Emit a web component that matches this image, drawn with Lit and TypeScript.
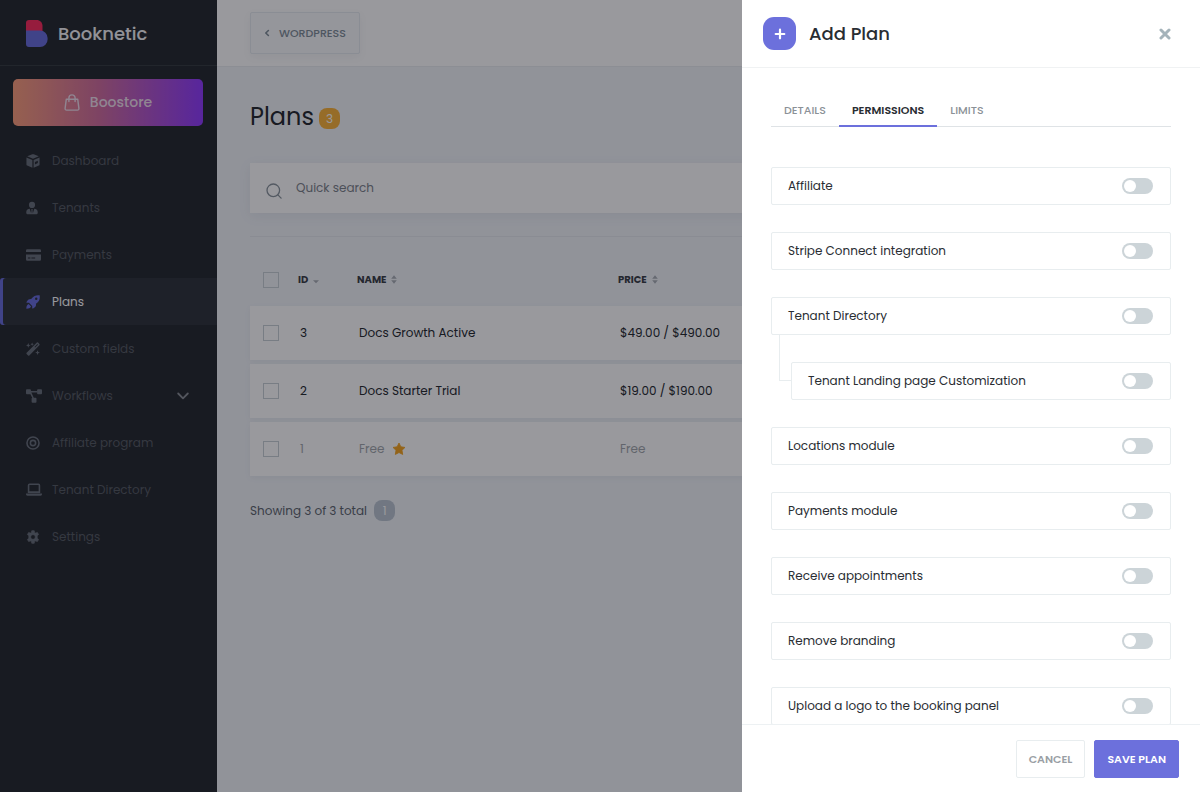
import { LitElement, html, css, svg, nothing, TemplateResult } from "lit";
import { customElement, property, state } from "lit/decorators.js";
import { classMap } from "lit/directives/class-map.js";

const icons: Record<string, TemplateResult> = {
  cube: svg`<svg viewBox="0 0 16 16" width="14" height="14"><path fill="currentColor" fill-rule="evenodd" d="M8 .3c.3 0 .5 0 .8.1l5.800 2.200L8 5.500 1.400 2.600 7.200.4c.3-.1.500-.1.800-.1zM.5 3.900l6.800 3v8.700L1.300 13.200a1.300 1.300 0 0 1-.8-1.200zM15.500 3.900V12a1.300 1.300 0 0 1-.8 1.200l-6 2.400V6.900zM10.200 9v2.900l3.300-1.500V7.600z"/></svg>`,
  user: svg`<svg viewBox="0 0 14 16" width="12" height="14"><path fill="currentColor" d="M7 .8a3.600 3.600 0 1 1 0 7.200 3.600 3.600 0 0 1 0-7.200zM4.300 9 6 14.200 6.400 11 5.900 9.600h2.200L7.600 11l.4 3.200L9.700 9c2.500.2 4 1.700 4 4v.9a1.300 1.300 0 0 1-1.300 1.300H1.600A1.300 1.300 0 0 1 .3 13.900V13c0-2.300 1.500-3.800 4-4z"/></svg>`,
  card: svg`<svg viewBox="0 0 18 14" width="15" height="12"><path fill="currentColor" fill-rule="evenodd" d="M1.500 0h15A1.500 1.500 0 0 1 18 1.500V3.300H0V1.500A1.500 1.500 0 0 1 1.500 0zM0 6.300h18v6.200a1.500 1.500 0 0 1-1.500 1.500h-15A1.500 1.500 0 0 1 0 12.500zm2.300 3.600v1.400h3V9.900zm4.200 0v1.400H11V9.900z"/></svg>`,
  rocket: svg`<svg viewBox="0 0 16 16" width="14" height="14"><path fill="currentColor" fill-rule="evenodd" d="M15.600.4c.5 3.600 0 6.500-4.200 9.700.3 2.300-.3 3.500-3.300 5.300-.6.3-1 0-1-.6v-2.200L3.400 8.900H1.200c-.6 0-.9-.5-.6-1C2.400 5.100 3.600 4.500 5.900 4.600 9.100.5 12 0 15.600.4zM11.700 2.900a1.400 1.400 0 1 0 0 2.800 1.400 1.400 0 0 0 0-2.800zM3 10.300l2.800 2.800C4.900 15 2.900 15.700.4 15.600c0-2.500.7-4.400 2.600-5.300z"/></svg>`,
  wand: svg`<svg viewBox="0 0 16 16" width="14" height="14"><path fill="currentColor" fill-rule="evenodd" d="M12.400.7a1 1 0 0 1 1.400 0l1.500 1.500a1 1 0 0 1 0 1.400L3.800 15.300a1 1 0 0 1-1.400 0L.7 13.600a1 1 0 0 1 0-1.400zm.7 1.700L9.800 5.700l.6.600L13.700 3zM7 .5l.6 1.400L9 2.500l-1.400.6L7 4.500l-.6-1.400L5 2.500l1.400-.6zM2.600 1.200l.8 1.900 1.900.8-1.900.8-.8 1.900-.8-1.900L0 3.900l1.800-.8zM13.200 9.400l.8 1.900 1.900.8-1.900.8-.8 1.900-.8-1.900-1.900-.8 1.900-.8z"/></svg>`,
  flow: svg`<svg viewBox="0 0 18 15" width="16" height="14"><g fill="currentColor"><rect x="0" y="0" width="5.500" height="5.500" rx="1"/><rect x="12.500" y="0" width="5.500" height="5.500" rx="1"/><rect x="6.300" y="9.500" width="5.500" height="5.500" rx="1"/><path d="M5 2h8v1.600H6l2.800 5.800-1.400.8L3.800 3.300z"/></g></svg>`,
  target: svg`<svg viewBox="0 0 16 16" width="14" height="14" fill="none" stroke="currentColor" stroke-width="1.800"><circle cx="8" cy="8" r="6.900"/><circle cx="8" cy="8" r="3"/></svg>`,
  laptop: svg`<svg viewBox="0 0 18 14" width="16" height="13"><path fill="none" stroke="currentColor" stroke-width="1.800" d="M2.900 10V2.200c0-.7.4-1.100 1.100-1.100h10c.7 0 1.100.4 1.100 1.100V10z"/><path fill="currentColor" d="M0 11.600h18v.8c0 1-.6 1.600-1.600 1.600H1.600C.6 14 0 13.400 0 12.400z"/></svg>`,
  gear: svg`<svg viewBox="0 0 16 16" width="14" height="14"><path fill="currentColor" stroke="currentColor" stroke-width=".8" stroke-linejoin="round" fill-rule="evenodd" d="M6.600.8h2.800l.4 2 1.200.7 2-.7 1.400 2.400-1.600 1.400v2.800l1.600 1.400-1.400 2.400-2-.7-1.200.7-.4 2H6.600l-.4-2-1.200-.7-2 .7-1.400-2.400 1.600-1.400V6.600L1.600 5.200 3 2.800l2 .7 1.200-.7zM8 5.300a2.700 2.700 0 1 0 0 5.400 2.700 2.700 0 0 0 0-5.400z"/></svg>`,
  chevronDown: svg`<svg viewBox="0 0 12 8" width="12" height="8" fill="none" stroke="currentColor" stroke-width="1.800" stroke-linecap="round" stroke-linejoin="round"><path d="m1.200 1.500 4.800 4.800 4.800-4.800"/></svg>`,
  chevronLeft: svg`<svg viewBox="0 0 6 8" width="6" height="8" fill="none" stroke="currentColor" stroke-width="1.600" stroke-linecap="round" stroke-linejoin="round"><path d="M4.400 1.500 1.800 4l2.600 2.500"/></svg>`,
  bag: svg`<svg viewBox="0 0 16 17" width="16" height="17" fill="none" stroke="currentColor" stroke-width="1.400" stroke-linejoin="round" stroke-linecap="round"><path d="M2.300 5.200h11.400l1.200 9.200c.1 1-.5 1.700-1.500 1.700H2.600c-1 0-1.600-.7-1.500-1.700z"/><path d="M4.900 7.500V4a3.100 3.100 0 0 1 6.200 0v3.500"/></svg>`,
  search: svg`<svg viewBox="0 0 16 16" width="16" height="16" fill="none" stroke="currentColor" stroke-width="1.300" stroke-linecap="round"><circle cx="7.300" cy="7.300" r="6.300"/><path d="m11.900 11.900 3.200 3.200"/></svg>`,
  star: svg`<svg viewBox="0 0 16 16" width="14" height="14"><path fill="currentColor" stroke="currentColor" stroke-width="1" stroke-linejoin="round" d="m8 1.200 2.100 4.300 4.700.7-3.400 3.300.8 4.700L8 12l-4.200 2.200.8-4.700L1.200 6.200l4.700-.7z"/></svg>`,
  plus: svg`<svg viewBox="0 0 12 12" width="12" height="12" stroke="currentColor" stroke-width="2.200" stroke-linecap="round"><path d="M6 1.700v8.600M1.700 6h8.600"/></svg>`,
  close: svg`<svg viewBox="0 0 12 12" width="12" height="12" stroke="currentColor" stroke-width="3" stroke-linecap="round"><path d="m2 2 8 8M10 2l-8 8"/></svg>`,
  sort: svg`<svg viewBox="0 0 6 9" width="6" height="9" fill="currentColor"><path d="M3 .3 5.800 3.700H.2zM3 8.700.2 5.300h5.600z"/></svg>`,
  sortDesc: svg`<svg viewBox="0 0 6 9" width="6" height="9" fill="currentColor"><path d="M3 8.200 0 5.200h6z"/></svg>`,
  logo: svg`<svg viewBox="0 0 22 27" width="22" height="27"><path fill="#fa2f60" d="M0 3a3 3 0 0 1 3-3h7.500c3.600 0 6 2.600 6 6v6H0z"/><path fill="#6c70dc" d="M0 10.500h14a7.600 7.600 0 0 1 7.600 7.700v1A7.600 7.600 0 0 1 14 27H3a3 3 0 0 1-3-3z"/></svg>`,
};

@customElement("app-sidebar")
export class AppSidebar extends LitElement {
  static styles = css`
    :host { display: block; background: #292d32; color: #595f66; }
    .brand {
      display: flex; align-items: center; gap: 10px; box-sizing: border-box;
      height: 66px; padding: 1px 26px 0; border-bottom: 1px solid #3a4044;
      color: #f4f4f6; font-size: 18px; font-weight: 500; text-decoration: none;
    }
    .store {
      display: flex; align-items: center; justify-content: center; gap: 10px;
      margin: 13px 14px 11px 13px; height: 47px; border-radius: 5px; color: #f0dfec;
      background: linear-gradient(90deg, #fba17e, #d2719f 45%, #923fff);
      text-decoration: none; font-size: 14px; font-weight: 500;
    }
    .item {
      display: flex; align-items: center; box-sizing: border-box; height: 47px;
      padding: 0 28px 0 26px; border-radius: 3px 0 0 3px;
      color: inherit; text-decoration: none; font-size: 12px;
    }
    .glyph { display: flex; width: 26px; color: #6c737d; }
    .label { flex: 1; }
    .active { background: #32383f; box-shadow: inset 3px 0 #6c70dc; color: #fff; }
    .active .glyph { color: #6c70dc; }
    .arrow { display: flex; color: #8a8f96; }
  `;

  private items = [
    ["cube", "Dashboard"], ["user", "Tenants"], ["card", "Payments"],
    ["rocket", "Plans"], ["wand", "Custom fields"], ["flow", "Workflows"],
    ["target", "Affiliate program"], ["laptop", "Tenant Directory"], ["gear", "Settings"],
  ];

  render() {
    return html`
      <a class="brand" href="#">${icons.logo}<span>Booknetic</span></a>
      <a class="store" href="#boostore">${icons.bag}<span>Boostore</span></a>
      <nav>
        ${this.items.map(([icon, label]) => html`
          <a class=${classMap({ item: true, active: label === "Plans" })} href="#">
            <span class="glyph">${icons[icon]}</span>
            <span class="label">${label}</span>
            ${label === "Workflows" ? html`<span class="arrow">${icons.chevronDown}</span>` : nothing}
          </a>`)}
      </nav>
    `;
  }
}

@customElement("plans-page")
export class PlansPage extends LitElement {
  static styles = css`
    :host { display: block; color: #292d32; font-size: 12px; }
    .top {
      display: flex; align-items: center; box-sizing: border-box; height: 67px;
      padding: 0 33px; background: #fff; border-bottom: 1px solid #e9edf1;
    }
    .back {
      display: flex; align-items: center; gap: 9px; height: 42px; padding: 0 13px;
      background: #f8fafc; border: 1px solid #e6ebf0; border-radius: 2px;
      color: #828f9a; font: inherit; font-size: 11px; font-weight: 500;
      box-shadow: 0 3px 8px rgba(60, 80, 110, 0.06);
    }
    .content { padding: 32px 33px; }
    .title { display: flex; align-items: center; gap: 5px; }
    h1 { margin: 0; font-size: 24px; line-height: 36px; font-weight: 400; }
    .count, .page {
      display: flex; align-items: center; justify-content: center;
      width: 21px; height: 21px; border-radius: 8px; color: #fff; font: inherit; font-size: 12px;
    }
    .count { background: #fbb53c; margin-top: 3px; }
    .search {
      display: flex; align-items: center; gap: 12px; height: 50px; margin-top: 28px;
      padding: 0 16px; background: #fff; color: #8c969e;
      box-shadow: 0 3px 12px rgba(60, 80, 110, 0.08);
    }
    .search svg { margin-top: 5px; }
    .search input { flex: 1; border: 0; outline: 0; background: none; font: inherit; color: #292d32; }
    .search input::placeholder { color: #7f868e; opacity: 1; }
    .list { margin-top: 23px; border-top: 1px solid #e6eaee; }
    table { width: 100%; table-layout: fixed; border-collapse: separate; border-spacing: 0 4px; margin-top: 11px; }
    .col-check { width: 48px; }
    .col-id { width: 59px; }
    .col-name { width: 261px; }
    th, td { text-align: left; font-weight: 400; }
    th { box-sizing: border-box; height: 50px; padding: 5px 0 0; font-size: 10px; font-weight: 700; color: #3c4148; }
    td { height: 54px; background: #fff; padding: 0 0 0 2px; }
    tr { box-shadow: 0 2px 6px rgba(60, 80, 110, 0.06); }
    thead tr { box-shadow: none; }
    .check { padding-left: 13px; }
    .check input {
      appearance: none; display: block; box-sizing: border-box; width: 16px; height: 16px;
      margin: 0; border: 1px solid #c9d0d6; background: #fff;
    }
    th.check input { background: none; }
    .sort { display: inline-flex; align-items: center; gap: 5px; padding: 0; border: 0; background: none; font: inherit; color: inherit; }
    .sort svg { color: #aab0b6; }
    .muted td { color: #a4a9ae; }
    .name { display: flex; align-items: center; gap: 8px; }
    .name svg { color: #f5a623; }
    .footer { display: flex; align-items: center; gap: 7px; margin-top: 20px; color: #626971; }
    .page { border: 0; padding: 0; background: #bcc7d2; }
  `;

  private plans = [
    { id: 3, name: "Docs Growth Active", price: "$49.00 / $490.00", free: false },
    { id: 2, name: "Docs Starter Trial", price: "$19.00 / $190.00", free: false },
    { id: 1, name: "Free", price: "Free", free: true },
  ];

  render() {
    return html`
      <header class="top"><button class="back">${icons.chevronLeft}<span>WORDPRESS</span></button></header>
      <div class="content">
        <div class="title"><h1>Plans</h1><span class="count">3</span></div>
        <label class="search">${icons.search}<input type="search" placeholder="Quick search" aria-label="Quick search" /></label>
        <div class="list">
          <table>
            <colgroup><col class="col-check" /><col class="col-id" /><col class="col-name" /><col /></colgroup>
            <thead>
              <tr>
                <th class="check"><input type="checkbox" aria-label="Select all plans" /></th>
                <th><button class="sort">ID ${icons.sortDesc}</button></th>
                <th><button class="sort">NAME ${icons.sort}</button></th>
                <th><button class="sort">PRICE ${icons.sort}</button></th>
              </tr>
            </thead>
            <tbody>
              ${this.plans.map((p) => html`
                <tr class=${classMap({ muted: p.free })}>
                  <td class="check"><input type="checkbox" aria-label="Select ${p.name}" /></td>
                  <td>${p.id}</td>
                  <td><span class="name">${p.name}${p.free ? icons.star : nothing}</span></td>
                  <td>${p.price}</td>
                </tr>`)}
            </tbody>
          </table>
          <div class="footer"><span>Showing 3 of 3 total</span><button class="page">1</button></div>
        </div>
      </div>
    `;
  }
}

@customElement("permission-switch")
export class PermissionSwitch extends LitElement {
  @property() label = "";
  static styles = css`
    :host { display: block; }
    .box {
      display: flex; align-items: center; justify-content: space-between; gap: 16px;
      box-sizing: border-box; height: 38px; padding: 0 17px 0 16px;
      border: 1px solid #e8edef; border-radius: 2px; background: #fff; font-size: 12px; color: #292d32;
    }
    input {
      appearance: none; display: flex; align-items: center; box-sizing: border-box;
      width: 31px; height: 16px; margin: 0; padding: 0 2px; border-radius: 8px; background: #ccd4d8; cursor: pointer;
    }
    input::before { content: ""; width: 12px; height: 12px; border-radius: 50%; background: #fff; }
    input:checked { justify-content: flex-end; background: #6c70dc; }
  `;
  render() {
    return html`<label class="box"><span>${this.label}</span><input type="checkbox" role="switch" /></label>`;
  }
}

@customElement("add-plan-drawer")
export class AddPlanDrawer extends LitElement {
  @state() private tab = "PERMISSIONS";

  static styles = css`
    :host { display: flex; flex-direction: column; background: #fff; color: #292d32; }
    .head {
      display: flex; align-items: center; gap: 13px; box-sizing: border-box; height: 68px;
      padding: 0 29px 0 21px; border-bottom: 1px solid #f0f2f3;
    }
    .badge {
      display: flex; align-items: center; justify-content: center;
      width: 33px; height: 33px; border-radius: 11px; background: #6c70dc; color: #fff;
    }
    h2 { flex: 1; margin: 0; font-size: 18px; font-weight: 500; }
    .close { display: flex; padding: 0; border: 0; background: none; color: #a4b3ba; }
    .body { flex: 1; min-height: 0; overflow-y: auto; scrollbar-width: none; padding: 27px 29px; }
    .tabs { display: flex; border-bottom: 1px solid #dfe3e6; }
    .tab {
      height: 32px; padding: 1px 13px 0; margin-bottom: -1px; border: 0; border-bottom: 2px solid transparent;
      background: none; color: #8b9197; font: inherit; font-size: 11px; font-weight: 500;
    }
    .tab.on { color: #292d32; border-bottom-color: #6c70dc; font-weight: 600; }
    .perms { display: flex; flex-direction: column; gap: 27px; margin: 40px 0 0; padding: 0; list-style: none; }
    .child { position: relative; padding-left: 20px; }
    .child::before {
      content: ""; position: absolute; left: 8px; top: -27px; width: 12px; height: 46px;
      box-sizing: border-box; border: solid #e8edef; border-width: 0 0 1px 1px;
    }
    .foot {
      display: flex; justify-content: flex-end; gap: 9px; padding: 15px 21px 14px;
      border-top: 1px solid #edf1f3; background: #fff;
    }
    .btn { height: 38px; padding: 0 12px; border-radius: 2px; font: inherit; font-size: 11px; font-weight: 600; }
    .cancel { border: 1px solid #e8edef; background: #fff; color: #9a9fa5; }
    .save { border: 1px solid #6c70dc; background: #6c70dc; color: #fff; }
  `;

  private perms = [
    "Affiliate", "Stripe Connect integration", "Tenant Directory", "Tenant Landing page Customization",
    "Locations module", "Payments module", "Receive appointments", "Remove branding",
    "Upload a logo to the booking panel",
  ];

  render() {
    return html`
      <header class="head">
        <span class="badge">${icons.plus}</span>
        <h2>Add Plan</h2>
        <button class="close" aria-label="Close">${icons.close}</button>
      </header>
      <div class="body">
        <div class="tabs" role="tablist">
          ${["DETAILS", "PERMISSIONS", "LIMITS"].map((t) => html`
            <button role="tab" aria-selected=${t === this.tab} class=${classMap({ tab: true, on: t === this.tab })}
              @click=${() => (this.tab = t)}>${t}</button>`)}
        </div>
        <ul class="perms">
          ${this.perms.map((p) => html`
            <li class=${classMap({ child: p.startsWith("Tenant Landing") })}>
              <permission-switch .label=${p}></permission-switch>
            </li>`)}
        </ul>
      </div>
      <footer class="foot">
        <button class="btn cancel">CANCEL</button>
        <button class="btn save">SAVE PLAN</button>
      </footer>
    `;
  }
}

@customElement("app-root")
export class AppRoot extends LitElement {
  static styles = css`
    :host {
      display: grid; grid-template-columns: 217px 1fr; min-height: 100vh;
      background: #f2f5f9; font-family: "Poppins", "Inter", sans-serif; font-size: 12px;
    }
    .backdrop { position: fixed; inset: 0; background: rgba(0, 0, 10, 0.4); }
    .drawer { position: fixed; top: 0; right: 0; bottom: 0; width: 458px; max-width: 100%; }
  `;

  render() {
    return html`
      <app-sidebar></app-sidebar>
      <plans-page></plans-page>
      <div class="backdrop"></div>
      <add-plan-drawer class="drawer" role="dialog" aria-label="Add Plan"></add-plan-drawer>
    `;
  }
}
